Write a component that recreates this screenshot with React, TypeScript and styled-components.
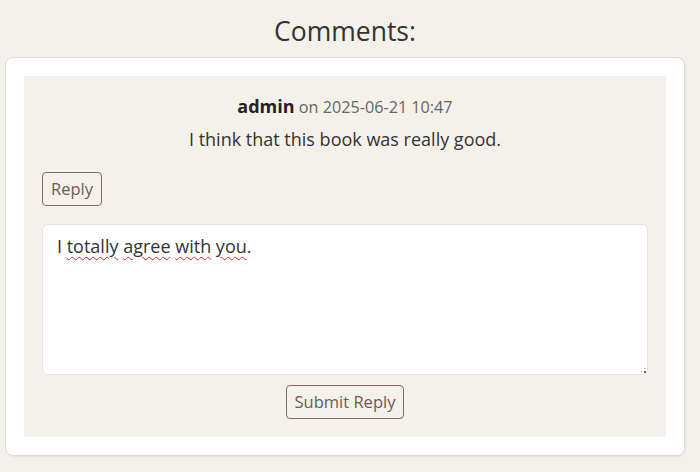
import React from "react";
import styled, { createGlobalStyle } from "styled-components";

const GlobalStyle = createGlobalStyle`
  html, body {
    margin: 0;
    padding: 0;
    background: #f4f1eb;
  }
  body {
    font-family: "Open Sans", "Noto Sans", sans-serif;
    color: #333;
  }
`;

const Page = styled.div`
  padding: 12px 15px 0 5px;
  min-height: 460px;
`;

const Heading = styled.h2`
  margin: 0 0 7px;
  text-align: center;
  font-size: 26.5px;
  font-weight: 400;
  line-height: 38px;
  color: #333;
`;

const Card = styled.section`
  background: #fff;
  border: 1px solid #dcdcdc;
  border-radius: 8px;
  box-shadow: 1px 1px 2px rgba(0, 0, 0, 0.06);
  padding: 18px;
`;

const CommentBox = styled.article`
  background: #f4f1eb;
  padding: 18px;
  display: flex;
  flex-direction: column;
`;

const Meta = styled.div`
  text-align: center;
  font-size: 16.2px;
  line-height: 24px;
  color: #666;
`;

const Author = styled.strong`
  font-size: 18px;
  font-weight: 700;
  color: #222;
`;

const Body = styled.p`
  margin: 8px 0 0;
  text-align: center;
  font-size: 18px;
  line-height: 24px;
  color: #333;
`;

const Actions = styled.div<{ $align: "start" | "center" }>`
  display: flex;
  justify-content: ${(p) => (p.$align === "center" ? "center" : "flex-start")};
`;

const OutlineButton = styled.button`
  font-family: "Open Sans", "Noto Sans", sans-serif;
  font-size: 16.5px;
  line-height: 22px;
  padding: 5px 8px;
  color: #6e5b55;
  background: transparent;
  border: 1px solid #7d6a64;
  border-radius: 4px;
  cursor: pointer;
`;

const ReplyRow = styled(Actions)`
  margin-top: 21px;
`;

const SubmitRow = styled(Actions)`
  margin-top: 10px;
`;

const TextBox = styled.div`
  position: relative;
  margin-top: 18px;
  height: 151px;
  box-sizing: border-box;
  background: #fff;
  border: 1px solid #e1e5ea;
  border-radius: 6px;
  padding: 9px 14px 8px;
  font-size: 18px;
  line-height: 24px;
  color: #333;
  outline: none;
`;

const Misspelled = styled.span`
  text-decoration: underline wavy #e8202a;
  text-decoration-thickness: 1px;
  text-underline-offset: 3px;
`;

const Grip = styled.svg`
  position: absolute;
  right: 1px;
  bottom: 1px;
`;

export default function App() {
  return (
    <>
      <GlobalStyle />
      <Page>
        <Heading>Comments:</Heading>
        <Card>
          <CommentBox>
            <Meta>
              <Author>admin</Author> on 2025-06-21 10:47
            </Meta>
            <Body>I think that this book was really good.</Body>
            <ReplyRow $align="start">
              <OutlineButton>Reply</OutlineButton>
            </ReplyRow>
            <TextBox role="textbox" aria-multiline="true">
              I <Misspelled>totally</Misspelled> <Misspelled>agree</Misspelled>{" "}
              <Misspelled>with</Misspelled> <Misspelled>you</Misspelled>.
              <Grip width="5" height="5" viewBox="0 0 5 5">
                <rect x="3" y="3" width="2" height="2" fill="#666" />
                <rect x="0" y="3" width="1" height="1" fill="#aaa" />
                <rect x="3" y="0" width="1" height="1" fill="#aaa" />
              </Grip>
            </TextBox>
            <SubmitRow $align="center">
              <OutlineButton>Submit Reply</OutlineButton>
            </SubmitRow>
          </CommentBox>
        </Card>
      </Page>
    </>
  );
}
